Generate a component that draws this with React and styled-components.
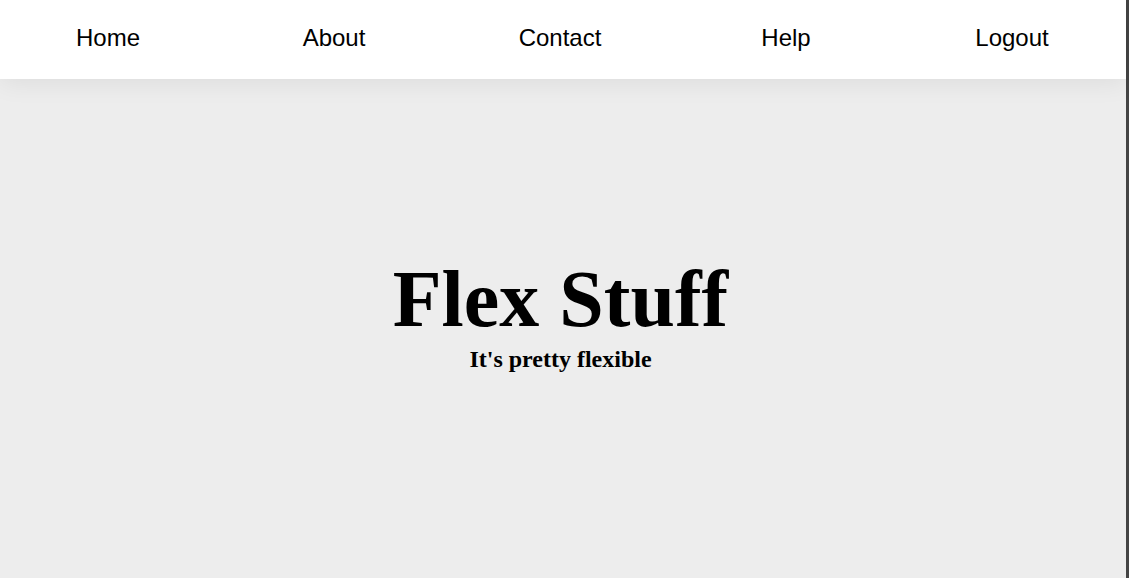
import React from 'react';
import styled, { createGlobalStyle } from 'styled-components';

const GlobalStyle = createGlobalStyle`
  html, body {
    margin: 0;
    padding: 0;
    height: 100%;
  }
  body {
    background: #ededed;
    font-family: "Liberation Sans", Arial, sans-serif;
  }
  #root {
    height: 100%;
  }
`;

const Page = styled.div`
  display: flex;
  flex-direction: column;
  height: 100%;
  box-sizing: border-box;
  border-right: 3px solid #444;
`;

const Nav = styled.nav`
  position: relative;
  z-index: 1;
  height: 79px;
  background: #fff;
  box-shadow: 0 4px 24px rgba(0, 0, 0, 0.07);
`;

const NavList = styled.ul`
  display: grid;
  grid-template-columns: repeat(5, 216px);
  column-gap: 10px;
  align-items: center;
  box-sizing: border-box;
  height: 100%;
  margin: 0;
  padding: 0 0 4px;
  list-style: none;
`;

const NavItem = styled.li`
  text-align: center;
`;

const NavLink = styled.a`
  color: #000;
  font-size: 24px;
  text-decoration: none;
`;

const Hero = styled.main`
  flex: 1;
  display: flex;
  flex-direction: column;
  align-items: center;
  justify-content: center;
  width: 1121px;
  padding-bottom: 24px;
  font-family: "Liberation Serif", "Times New Roman", serif;
`;

const Title = styled.h1`
  margin: 0;
  font-size: 80px;
  line-height: 1;
  font-weight: bold;
`;

const Subtitle = styled.h2`
  margin: 6px 0 0;
  font-size: 24px;
  line-height: 29px;
  font-weight: bold;
`;

const links = ['Home', 'About', 'Contact', 'Help', 'Logout'];

const App = () => (
  <Page>
    <GlobalStyle />
    <Nav>
      <NavList>
        {links.map((label) => (
          <NavItem key={label}>
            <NavLink href="#">{label}</NavLink>
          </NavItem>
        ))}
      </NavList>
    </Nav>
    <Hero>
      <Title>Flex Stuff</Title>
      <Subtitle>It's pretty flexible</Subtitle>
    </Hero>
  </Page>
);

export default App;
